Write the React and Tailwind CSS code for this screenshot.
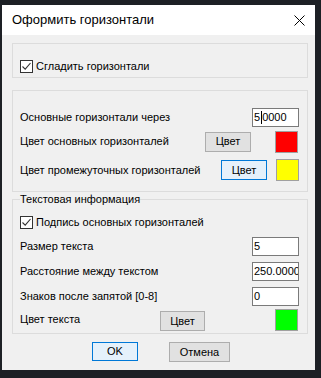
import React from "react";

const Check = () => (
  <div className="w-[13px] h-[13px] border border-[#333333] bg-white flex items-center justify-center shrink-0">
    <svg width="11" height="11" viewBox="0 0 11 11">
      <path d="M1.5 5.5 L4.2 8.2 L9.5 2" fill="none" stroke="#333" strokeWidth="1.1" />
    </svg>
  </div>
);

const Btn = ({ children, active, className = "" }) => (
  <div
    className={`flex items-center justify-center border ${
      active ? "border-[#0078d7] bg-[#e5f1fb]" : "border-[#adadad] bg-[#e1e1e1]"
    } ${className}`}
  >
    {children}
  </div>
);

const Field = ({ children }) => (
  <div className="w-[47px] h-[19px] border border-[#7a7a7a] bg-white flex items-center pl-[1px] overflow-hidden whitespace-nowrap">
    {children}
  </div>
);

const Swatch = ({ color }) => (
  <div className={`w-[23px] h-[22px] border border-[#a0a0a0] ${color}`} />
);

export default function App() {
  return (
    <div className="relative w-[321px] h-[378px] bg-[#1d2025] overflow-hidden pt-[5px] pl-[2px] font-['Liberation_Sans',Arial,sans-serif] text-[11px] text-black">
      <div className="w-[313px] h-[365px] flex flex-col">
        {/* title bar */}
        <div className="h-[30px] bg-white flex items-center justify-between pl-[10px] pr-[10px]">
          <span className="text-[13px]">Оформить горизонтали</span>
          <svg width="11" height="11" viewBox="0 0 11 11">
            <path d="M0.5 0.5 L10.5 10.5 M10.5 0.5 L0.5 10.5" stroke="#000" strokeWidth="1" />
          </svg>
        </div>

        {/* body */}
        <div className="flex-1 bg-[#f0f0f0] flex flex-col">
          <div className="ml-[10px] w-[296px] mt-[8px] h-[35px] border border-[#dcdcdc] pt-[16px] pl-[7px]">
            <div className="flex items-center gap-[3px] h-[13px]">
              <Check />
              <span>Сгладить горизонтали</span>
            </div>
          </div>

          <div className="ml-[10px] w-[296px] mt-[12px] border border-[#dcdcdc] pt-[17px] pb-[10px] pl-[7px] pr-[8px] flex flex-col">
            <div className="flex items-center justify-between h-[19px]">
              <span>Основные горизонтали через</span>
              <Field>
                <span>5</span>
                <span className="w-px h-[13px] bg-black ml-[1px]" />
                <span>0000</span>
              </Field>
            </div>
            <div className="flex items-center h-[21px] mt-[4px]">
              <span className="flex-1">Цвет основных горизонталей</span>
              <Btn className="w-[46px] h-[20px]">Цвет</Btn>
              <div className="ml-[24px] mr-px">
                <Swatch color="bg-[#ff0000]" />
              </div>
            </div>
            <div className="flex items-center h-[22px] mt-[7px]">
              <span className="flex-1">Цвет промежуточных горизонталей</span>
              <Btn active className="w-[46px] h-[20px]">Цвет</Btn>
              <div className="ml-[9px]">
                <Swatch color="bg-[#ffff00]" />
              </div>
            </div>
          </div>

          <fieldset className="ml-[10px] w-[296px] border border-[#dcdcdc] pl-[7px] pr-[8px] pb-[2px] flex flex-col">
            <legend className="leading-[14px] px-0">Текстовая информация</legend>
            <div className="flex items-center gap-[3px] h-[13px] mt-[10px]">
              <Check />
              <span>Подпись основных горизонталей</span>
            </div>
            <div className="flex items-center justify-between h-[19px] mt-[8px]">
              <span>Размер текста</span>
              <Field>5</Field>
            </div>
            <div className="flex items-center justify-between h-[19px] mt-[6px]">
              <span>Расстояние между текстом</span>
              <Field>250.0000</Field>
            </div>
            <div className="flex items-center justify-between h-[19px] mt-[6px]">
              <span>Знаков после запятой [0-8]</span>
              <Field>0</Field>
            </div>
            <div className="flex items-center h-[23px] mt-[2px]">
              <span className="flex-1">Цвет текста</span>
              <Btn className="w-[45px] h-[20px] mt-[3px]">Цвет</Btn>
              <div className="ml-[70px] mr-px">
                <Swatch color="bg-[#00ff00]" />
              </div>
            </div>
          </fieldset>

          <div className="flex mt-[8px] pl-[90px] gap-[31px]">
            <Btn active className="w-[46px] h-[19px]">OK</Btn>
            <Btn className="w-[61px] h-[20px]">Отмена</Btn>
          </div>
        </div>
      </div>
    </div>
  );
}
